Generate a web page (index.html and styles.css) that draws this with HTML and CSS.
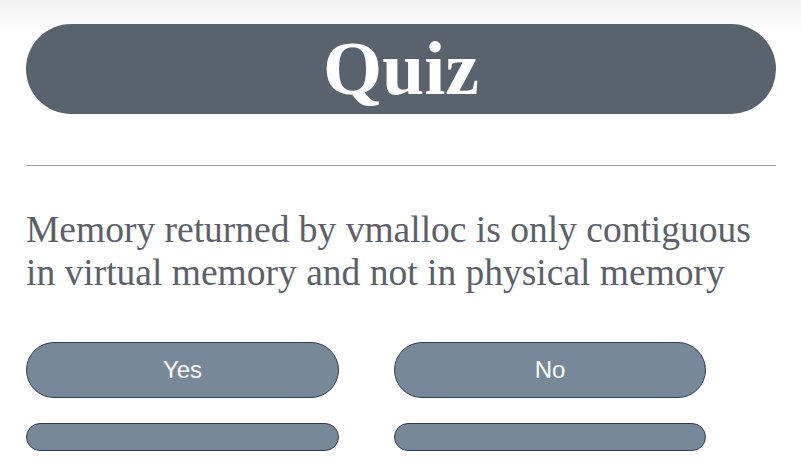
FILE: index.html
```html
<!DOCTYPE html>
<html lang="en">
<head>
<meta charset="utf-8">
<title>Quiz</title>
<link rel="stylesheet" href="styles.css">
</head>
<body>
<main class="page">
  <header class="banner"><h1 class="title">Quiz</h1></header>
  <hr class="rule">
  <p class="question">Memory returned by vmalloc is only contiguous in virtual memory and not in physical memory</p>
  <div class="answers">
    <button class="answer">Yes</button>
    <button class="answer">No</button>
    <button class="answer empty"></button>
    <button class="answer empty"></button>
  </div>
</main>
</body>
</html>
```
FILE: styles.css
```css
html, body {
  margin: 0;
  padding: 0;
}
body {
  background: linear-gradient(to bottom, #f1f1f1 0px, #ffffff 34px, #ffffff 100%);
  min-height: 471px;
  font-family: "Liberation Serif", "Times New Roman", serif;
}
.page {
  padding: 24px 25px 0 26px;
}
.banner {
  height: 90px;
  background: #59636d;
  border-radius: 45px;
  display: flex;
  align-items: center;
  justify-content: center;
}
.title {
  margin: 0;
  color: #ffffff;
  font-family: "Liberation Serif", "Times New Roman", serif;
  font-weight: bold;
  font-size: 76px;
  line-height: 1;
  padding-bottom: 2px;
}
.rule {
  margin: 51px 0 0 0;
  border: 0;
  height: 1px;
  background: #9a9a9a;
}
.question {
  margin: 42px 0 0 0;
  color: #5b6069;
  font-size: 37.5px;
  line-height: 43px;
}
.answers {
  margin-top: 48px;
  display: grid;
  grid-template-columns: 313px 312px;
  column-gap: 55px;
  row-gap: 25px;
}
.answer {
  height: 56px;
  border: 1px solid #2f3d52;
  border-radius: 28px;
  background: #778899;
  color: #ffffff;
  font-family: "Liberation Sans", Arial, sans-serif;
  font-size: 24px;
  padding: 0;
}
.answer.empty {
  height: 28px;
  border-radius: 14px;
}
```
